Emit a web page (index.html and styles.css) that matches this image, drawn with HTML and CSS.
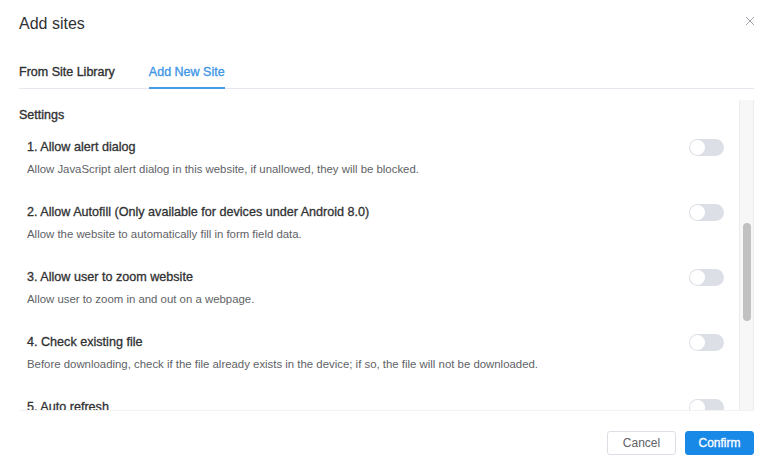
FILE: index.html
```html
<!DOCTYPE html>
<html>
<head>
    <title>Add sites</title>
    <link rel="stylesheet" href="styles.css">
</head>
<body>
    <div class="dialog">
        <div class="header">
            <span class="title">Add sites</span>
            <svg class="close" width="10" height="10" viewBox="0 0 10 10">
                <path d="M1 1 L9 9 M9 1 L1 9" stroke="#a0a3a8" stroke-width="1" fill="none"/>
            </svg>
        </div>

        <div class="tabs">
            <div class="tab">From Site Library</div>
            <div class="tab active">Add New Site</div>
        </div>

        <div class="scroll-area">
            <div class="content">
                <div class="section-label">Settings</div>

                <div class="item">
                    <div class="item-head">
                        <span class="item-title">1. Allow alert dialog</span>
                        <span class="toggle"><span class="knob"></span></span>
                    </div>
                    <div class="item-desc">Allow JavaScript alert dialog in this website, if unallowed, they will be blocked.</div>
                </div>

                <div class="item">
                    <div class="item-head">
                        <span class="item-title">2. Allow Autofill (Only available for devices under Android 8.0)</span>
                        <span class="toggle"><span class="knob"></span></span>
                    </div>
                    <div class="item-desc">Allow the website to automatically fill in form field data.</div>
                </div>

                <div class="item">
                    <div class="item-head">
                        <span class="item-title">3. Allow user to zoom website</span>
                        <span class="toggle"><span class="knob"></span></span>
                    </div>
                    <div class="item-desc">Allow user to zoom in and out on a webpage.</div>
                </div>

                <div class="item">
                    <div class="item-head">
                        <span class="item-title">4. Check existing file</span>
                        <span class="toggle"><span class="knob"></span></span>
                    </div>
                    <div class="item-desc">Before downloading, check if the file already exists in the device; if so, the file will not be downloaded.</div>
                </div>

                <div class="item">
                    <div class="item-head">
                        <span class="item-title">5. Auto refresh</span>
                        <span class="toggle"><span class="knob"></span></span>
                    </div>
                </div>
            </div>
            <div class="scrollbar">
                <div class="thumb"></div>
            </div>
        </div>

        <div class="footer">
            <button class="btn">Cancel</button>
            <button class="btn primary">Confirm</button>
        </div>
    </div>
</body>
</html>
```

FILE: styles.css
```css
body {
    margin: 0;
    background: #fff;
    font-family: "Liberation Sans", Arial, sans-serif;
    color: #303133;
}
.dialog {
    width: 768px;
    height: 470px;
    box-sizing: border-box;
    padding: 0 14px 0 19px;
    display: flex;
    flex-direction: column;
}
.header {
    height: 41px;
    padding-top: 3px;
    display: flex;
    justify-content: space-between;
    align-items: center;
}
.title {
    font-size: 16px;
    color: #303133;
}
.close {
    margin-top: -6px;
    margin-right: -1px;
}
.tabs {
    display: flex;
    gap: 34px;
    border-bottom: 1px solid #e4e7ed;
    padding-top: 18px;
}
.tab {
    font-size: 12.5px;
    line-height: 20px;
    color: #303133;
    -webkit-text-stroke: 0.35px #303133;
    padding-bottom: 5px;
    border-bottom: 2px solid transparent;
    margin-bottom: -1px;
}
.tab.active {
    color: #3f97e6;
    -webkit-text-stroke-color: #3f97e6;
    border-bottom-color: #4a9be6;
}
.scroll-area {
    margin-top: 11px;
    height: 310px;
    display: flex;
    border-bottom: 1px solid #f2f2f2;
}
.content {
    flex: 1;
    overflow: hidden;
    padding-right: 16px;
}
.section-label {
    font-size: 12.5px;
    line-height: 20px;
    margin-top: 5px;
    color: #303133;
    -webkit-text-stroke: 0.35px #303133;
}
.item {
    padding-left: 8px;
    margin-top: 12px;
}
.item + .item {
    margin-top: 25px;
}
.item-head {
    display: flex;
    justify-content: space-between;
    align-items: center;
    height: 20px;
}
.item-title {
    font-size: 12.6px;
    color: #303133;
    -webkit-text-stroke: 0.3px #303133;
}
.item-desc {
    margin-top: 4px;
    font-size: 11.4px;
    line-height: 16px;
    color: #606266;
}
.toggle {
    width: 35px;
    height: 17px;
    border-radius: 9px;
    background: #dcdfe6;
    display: flex;
    align-items: center;
    padding-left: 1px;
    box-sizing: border-box;
    margin-right: -1px;
}
.knob {
    width: 15px;
    height: 15px;
    border-radius: 50%;
    background: #fff;
}
.scrollbar {
    width: 13px;
    background: #f7f7f7;
    border-left: 1px solid #ececec;
    border-right: 1px solid #ececec;
    display: flex;
    justify-content: center;
}
.thumb {
    width: 8px;
    height: 98px;
    margin-top: 123px;
    border-radius: 4px;
    background: #c1c1c1;
}
.footer {
    display: flex;
    justify-content: flex-end;
    gap: 9px;
    padding-top: 20px;
}
.btn {
    width: 69px;
    height: 24px;
    font-family: "Liberation Sans", Arial, sans-serif;
    font-size: 12px;
    border-radius: 3px;
    border: 1px solid #dcdfe6;
    background: #fff;
    color: #606266;
    padding: 0;
}
.btn.primary {
    background: #1989e8;
    border-color: #1989e8;
    color: #fff;
    -webkit-text-stroke: 0.3px #fff;
}
```
